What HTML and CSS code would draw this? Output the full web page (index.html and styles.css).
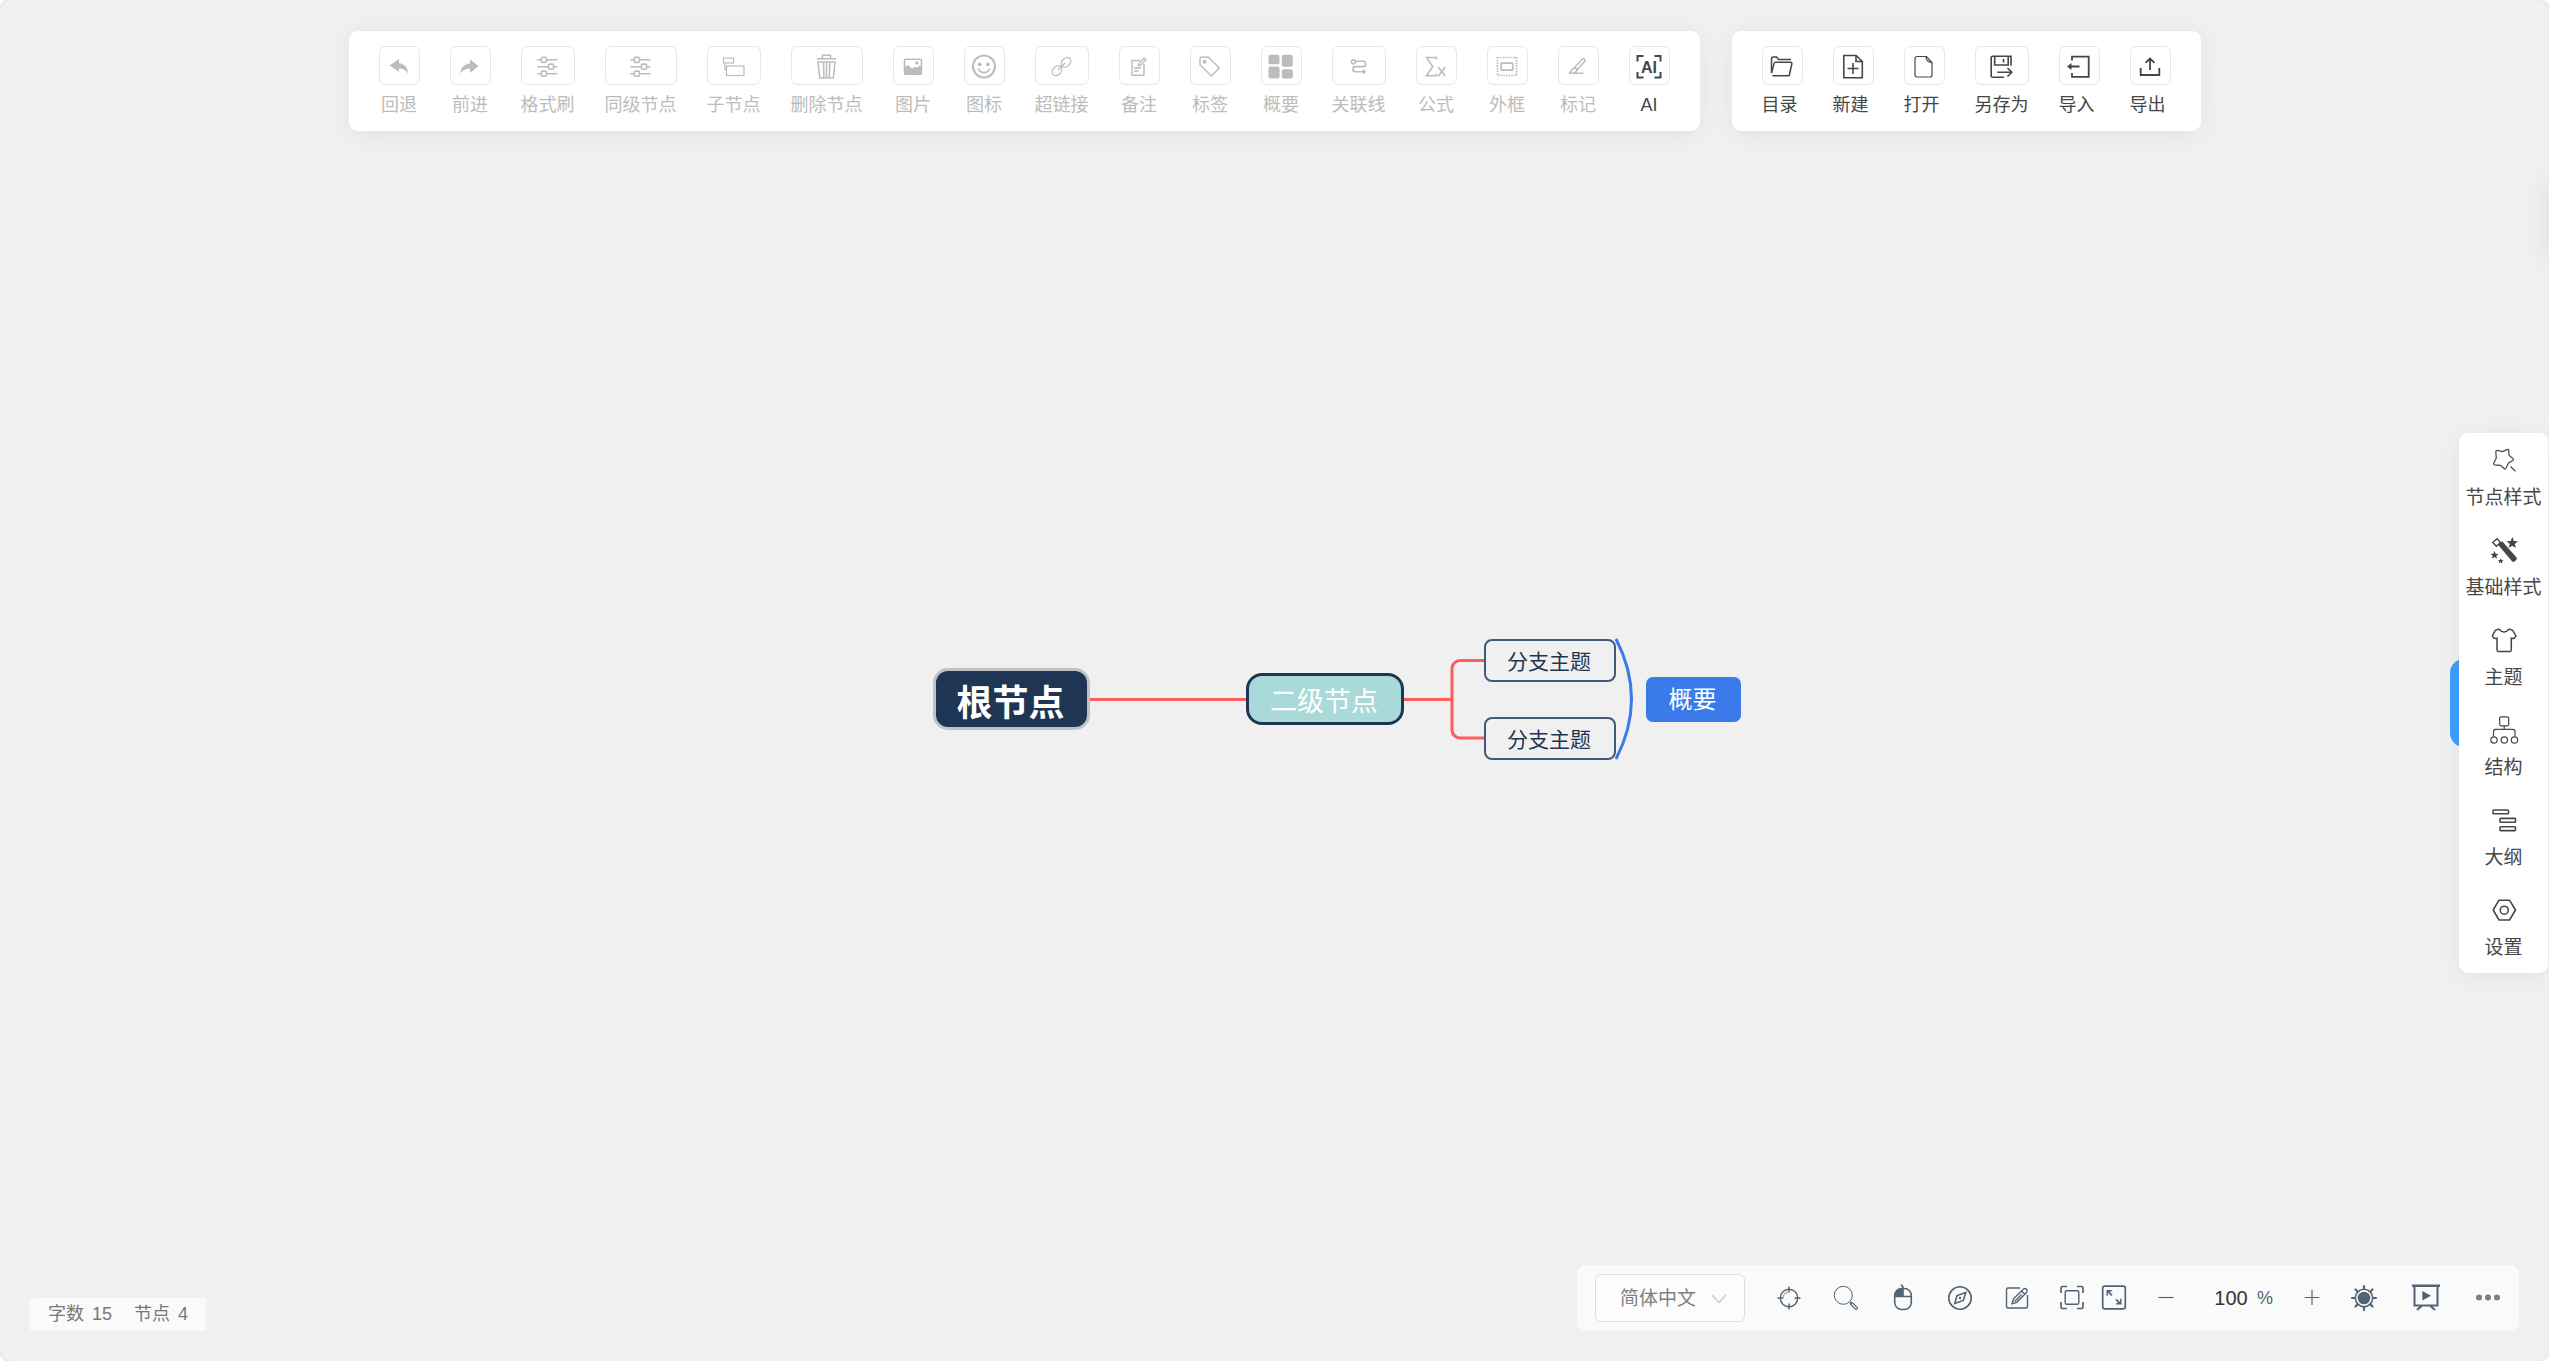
FILE: index.html
```html
<!DOCTYPE html>
<html lang="zh-CN">
<head>
<meta charset="utf-8">
<title>思维导图</title>
<link rel="stylesheet" href="styles.css">
</head>
<body>
<div class="app">
  <section class="map" aria-label="思维导图">
    <svg class="map-lines" width="809" height="121" viewBox="0 0 809 121" fill="none" stroke-width="3">
      <g stroke="#fa5f5e">
        <path d="M157 60.500H313M470 60.500H519"/>
        <path d="M552 21.500H527a8 8 0 0 0-8 8V91a8 8 0 0 0 8 8H552"/>
      </g>
      <path d="M683 0Q714 60 683 120" stroke="#3a7be9"/>
    </svg>
    <div class="node node-root">根节点</div>
    <div class="node node-second">二级节点</div>
    <div class="node node-branch branch-a">分支主题</div>
    <div class="node node-branch branch-b">分支主题</div>
    <div class="node node-summary">概要</div>
  </section>

  <header class="toolbars">
    <div class="toolbar">
      <button class="tool" disabled><span class="tool-icon"><svg viewBox="0 0 24 24"><path class="solid" d="M2.500 11.500 12 5v4.200c5.500.5 9 4.300 9 10.500-2-3.800-5-5.200-9-5.200V18z"/></svg></span>回退</button>
      <button class="tool" disabled><span class="tool-icon"><svg viewBox="0 0 24 24"><path class="solid" d="M20.500 12 12 5.200v4.200c-5.500.5-9.500 4-9.500 10.300 2-3.800 5.500-5.200 9.500-5.200V19z"/></svg></span>前进</button>
      <button class="tool" disabled><span class="tool-icon"><svg viewBox="0 0 24 24" stroke-width="1.600"><path d="M1.300 5.700h4M11 5.700h10.400M1.300 12.700h11M18 12.700h3.400M1.300 19.700h4M11 19.700h10.400"/><rect x="5.300" y="3.200" width="5.200" height="5.200" rx="1.500"/><rect x="12.400" y="10.100" width="5.200" height="5.200" rx="1.500"/><rect x="5.300" y="17.100" width="5.200" height="5.200" rx="1.500"/></svg></span>格式刷</button>
      <button class="tool" disabled><span class="tool-icon"><svg viewBox="0 0 24 24" stroke-width="1.600"><path d="M1.300 5.700h4M11 5.700h10.400M1.300 12.700h11M18 12.700h3.400M1.300 19.700h4M11 19.700h10.400"/><rect x="5.300" y="3.200" width="5.200" height="5.200" rx="1.500"/><rect x="12.400" y="10.100" width="5.200" height="5.200" rx="1.500"/><rect x="5.300" y="17.100" width="5.200" height="5.200" rx="1.500"/></svg></span>同级节点</button>
      <button class="tool" disabled><span class="tool-icon"><svg viewBox="0 0 24 24" stroke-width="1.200"><rect x="1.500" y="4" width="10" height="5"/><rect x="4.500" y="12" width="17.500" height="9.500"/><path d="M3 9v7h1.500"/></svg></span>子节点</button>
      <button class="tool" disabled><span class="tool-icon"><svg viewBox="0 0 24 24" stroke-width="1.500"><path d="M2 4.700h19M7.500 4.500V1.300h8v3.200M3 8h17l-1.700 16H4.700zM8.500 8l.5 16M11.500 8v16M14.800 8l-.5 16"/></svg></span>删除节点</button>
      <button class="tool" disabled><span class="tool-icon"><svg viewBox="0 0 24 24" stroke-width="1.500"><rect x="3.500" y="5.200" width="17" height="15" rx="1.200"/><path class="solid" d="M3.500 13 7 11l4 3.500 2.500-1.500 2.500.5 3-2 1.500 1v8h-17z"/><circle class="solid" cx="15.800" cy="9" r="1.700"/></svg></span>图片</button>
      <button class="tool" disabled><span class="tool-icon"><svg viewBox="0 0 24 24" stroke-width="2"><circle cx="12" cy="12.500" r="11"/><circle class="solid" cx="7.700" cy="10.300" r="1.900"/><circle class="solid" cx="16" cy="10.300" r="1.900"/><path stroke-width="1.600" d="M6.300 14.500c2 5.500 9.400 5.500 11.400 0"/></svg></span>图标</button>
      <button class="tool" disabled><span class="tool-icon"><svg viewBox="0 0 24 24" stroke-width="1.300"><ellipse cx="7" cy="16.700" rx="5.500" ry="4" transform="rotate(-45 7 16.700)"/><ellipse cx="16" cy="8.300" rx="5.500" ry="4" transform="rotate(-45 16 8.300)"/><path d="m8 16 7-7" stroke-width="1.500"/></svg></span>超链接</button>
      <button class="tool" disabled><span class="tool-icon"><svg viewBox="0 0 24 24" stroke-width="1.400"><path d="M13 6.500H5v14.800h12V10M7 14h7M7 17h4.500"/><path d="m11.500 11.700.7-2.700 5-5 1.800 1.800-5 5z"/></svg></span>备注</button>
      <button class="tool" disabled><span class="tool-icon"><svg viewBox="0 0 24 24" stroke-width="1.400"><path d="M2 4.200A1 1 0 0 1 3 3.200h7.500L21.300 14l-8 8L2 10.700z"/><circle class="solid" cx="6.700" cy="7.700" r="2"/></svg></span>标签</button>
      <button class="tool" disabled><span class="tool-icon"><svg viewBox="0 0 24 24"><g class="solid"><rect x="-.5" y=".7" width="11" height="9.500" rx="2"/><rect x="12.800" y=".7" width="11" height="12" rx="2"/><rect x="-.5" y="12.500" width="11" height="12" rx="2"/><rect x="12.800" y="15.300" width="11" height="9.300" rx="2"/></g></svg></span>概要</button>
      <button class="tool" disabled><span class="tool-icon"><svg viewBox="0 0 24 24" stroke-width="1.600"><circle cx="6.500" cy="7.700" r="2"/><path d="M8.500 7.200H16a2.700 2.700 0 0 1 0 5.400H8.500a2.600 2.600 0 0 0 0 5.200H17"/><path class="solid" d="m15.800 15 3.600 2.800-3.600 2.700z"/></svg></span>关联线</button>
      <button class="tool" disabled><span class="tool-icon"><svg viewBox="0 0 24 24" stroke-width="1.600"><path d="M12.500 5.500V3.500H2.500l6.200 9-6.200 9.300h10v-2M14.300 13l7 9.300M21.300 13l-7 9.300"/></svg></span>公式</button>
      <button class="tool" disabled><span class="tool-icon"><svg viewBox="0 0 24 24" stroke-width="1.700"><rect x="2.500" y="3.500" width="19" height="18" stroke-dasharray="1.600 1.100"/><rect x="6.200" y="9.200" width="11.500" height="7" rx=".5"/></svg></span>外框</button>
      <button class="tool" disabled><span class="tool-icon"><svg viewBox="0 0 24 24" stroke-width="1.400"><path d="M8.500 13.500 16.200 5.300c2-1.500 3.800.5 2.500 2.200l-7.400 8z"/><path d="M8.300 14c3 0 4 4-1 5.200H3c2-.7 2.500-4.700 5.300-5.200M7 19.300h10.500" stroke-width="1.600"/></svg></span>标记</button>
      <button class="tool"><span class="tool-icon"><svg viewBox="0 0 24 24" stroke-width="2"><path d="M.5 7.500V2h6M17.500 2h6v5.500M23.500 18v5.500h-6M6.500 23.500h-6V18"/><text class="ai-text" x="12" y="18.500">AI</text></svg></span>AI</button>
    </div>
    <div class="toolbar toolbar-file">
      <button class="tool"><span class="tool-icon"><svg viewBox="0 0 24 24" stroke-width="1.500"><path d="M1.500 19V4.500q0-1.500 1.500-1.500h3.500l2 2.500H21"/><path d="M1.500 19 4 9.700Q4.300 8.300 5.500 8.300h15q1.700 0 1.300 1.700L19.500 20.500q-.3 1.300-1.500 1.300H2.500"/></svg></span>目录</button>
      <button class="tool"><span class="tool-icon"><svg viewBox="0 0 24 24" stroke-width="1.600"><path d="M2.800 1.500h12.500l6 6v16.300H2.800zM15 1.500v6h6.300M12 9v11M6.500 14.500h11"/></svg></span>新建</button>
      <button class="tool"><span class="tool-icon"><svg viewBox="0 0 24 24" stroke-width="1.200"><path d="M5 2.500h9.500l5.500 6V21a2 2 0 0 1-2 2H5a2 2 0 0 1-2-2V4.500a2 2 0 0 1 2-2zM14 2.500q0 5.500 6 6"/></svg></span>打开</button>
      <button class="tool"><span class="tool-icon"><svg viewBox="0 0 24 24" stroke-width="1.600"><path d="M14 23.200H2.500q-1.300 0-1.300-1.300V3.500Q1.200 2.200 2.500 2.200H21v9.500M4.700 2.200V11h13.500V2.200M13.500 5v3.500M7.300 18.200h14.200M17.500 14l4.300 4.200-4.300 4.300"/></svg></span>另存为</button>
      <button class="tool"><span class="tool-icon"><svg viewBox="0 0 24 24" stroke-width="1.800"><path d="M5 6.500V2.700h16.700v20.100H5V19M12.500 12.500H3"/><path class="solid" d="M0 12.500 4.500 9v7z"/></svg></span>导入</button>
      <button class="tool"><span class="tool-icon"><svg viewBox="0 0 24 24" stroke-width="1.800"><path d="M2.700 14v7h18.600v-7M12 16V5M7.500 8.800 12 4.500l4.500 4.300"/></svg></span>导出</button>
    </div>
  </header>

  <main class="stage">
    <nav class="side" aria-label="侧边栏">
      <div class="side-panel">
        <button class="side-item"><svg viewBox="0 0 28 28" stroke-width="1.200"><path d="M7.500 4.300 12.500 5.500 17.500 3.400q1.300-.3 1.300 1L19 9.300l4.200 3.600q.7.900-.3 1.500L18.500 17l-2.700 5.500q-.7 1-1.500.2L10.500 19.300 4.500 18.800q-1.200-.3-.8-1.400L6.300 12 5.800 5.500q.2-1.300 1.700-1.200zM20.500 20.500l5 4.800"/></svg>节点样式</button>
        <button class="side-item"><svg viewBox="0 0 28 28"><g class="solid"><path d="M8 8.800 12.200 5.200 26.500 21.500q.8 1.400-.3 2.500l-1.700 1.500q-1.300.9-2.500-.3z"/><path d="m22.300 1 1.600 4 4.100.3-3.200 2.600 1.100 4.100-3.600-2.300-3.600 2.300 1.100-4.100L16.600 5.300l4.100-.3zM4.500 14.800l1.100 2.900 3 .2-2.300 1.900.8 3-2.600-1.700L1.900 22.800l.8-3L.4 17.900l3-.2zM10.700 22.300l.8 1.800 2 .1-1.500 1.300.5 1.900-1.800-1.100-1.800 1.100.5-1.900-1.500-1.300 2-.1z"/></g><path d="M2.800 6.500 7 2.800 10.500 6.500 6.300 10.300z" stroke-width="1.400"/></svg>基础样式</button>
        <button class="side-item"><svg viewBox="0 0 28 28" stroke-width="1.500"><path d="M9 3.200q5 5.500 10 0 3 0 4 1.600L26 10q-1.700 3.500-4.700 2.200V24q0 1.400-1.400 1.400H8.300Q7 25.400 7 24V12.200Q4 13.500 2.300 10L5 4.800q1-1.600 4-1.600z"/></svg>主题</button>
        <button class="side-item"><svg viewBox="0 0 28 28" stroke-width="1.200"><rect x="9.700" y=".8" width="9" height="9" rx="1.500"/><path d="M14.200 9.800v3.500M3.500 20.500v-5q0-2.200 2.200-2.200h17.100q2.200 0 2.200 2.200v5"/><circle cx="4" cy="24" r="3.200"/><circle cx="14.300" cy="24" r="3.200"/><circle cx="24.500" cy="24" r="3.200"/></svg>结构</button>
        <button class="side-item"><svg viewBox="0 0 28 28" stroke-width="1.600"><rect x="3" y="4" width="15.500" height="3.800" rx=".8"/><rect x="10" y="12.400" width="15.500" height="3.800" rx=".8"/><rect x="10" y="20.800" width="15.500" height="3.800" rx=".8"/></svg>大纲</button>
        <button class="side-item"><svg viewBox="0 0 28 28" stroke-width="1.600"><path d="M9 4.200h10.500L25.500 14l-6 10H9L3.200 14z" stroke-linejoin="round"/><circle cx="14.300" cy="14.200" r="4"/></svg>设置</button>
      </div>
    </nav>
  </main>

  <footer class="bottom">
    <div class="counts">
      <span class="count">字数<span>15</span></span>
      <span class="count">节点<span>4</span></span>
    </div>
    <div class="controls">
      <div class="lang">
        <select class="lang-select" aria-label="语言"><option>简体中文</option></select>
        <svg class="lang-arrow" viewBox="0 0 16 10"><path d="m1 1 7 7.500L15 1"/></svg>
      </div>
      <div class="group group-tools">
        <button class="ctl" aria-label="回到根节点"><svg viewBox="0 0 28 28" stroke-width="1.400"><circle cx="14" cy="14" r="8.700"/><path d="M14 2.500v6M14 19.500v6M2.500 14h6M19.500 14h6"/><path d="M8 13a6 6 0 0 1 5-5" stroke-width=".7"/></svg></button>
        <button class="ctl" aria-label="搜索"><svg viewBox="0 0 28 28" stroke-width="1"><circle cx="11.300" cy="11.300" r="9"/><path d="m17.500 17.500 2 2"/><path d="m18.200 20 1.700-1.700 5.500 5.200q.5 1.700-1.600 2z" stroke-width="1.100"/></svg></button>
        <button class="ctl" aria-label="鼠标行为"><svg viewBox="0 0 28 28" stroke-width="1.600"><rect x="5.700" y="4.500" width="16.600" height="21" rx="7"/><path d="M5.700 12.500h16.600M14 12.500V4q0-2.500-2.300-3"/><path class="solid" d="M14 4.500v8H5.700c0-5 2.300-8 8.300-8z"/></svg></button>
        <button class="ctl" aria-label="小地图"><svg viewBox="0 0 28 28" stroke-width="1.600"><circle cx="14" cy="14" r="11.200"/><path d="m19.800 8.500-2.500 8-8.600 3 2.300-8z"/><circle class="solid" cx="14" cy="14" r="1.200"/></svg></button>
        <button class="ctl" aria-label="编辑"><svg viewBox="0 0 28 28" stroke-width="1.400"><path d="M17 4H5Q3.500 4 3.500 5.500v17Q3.500 24 5 24h18q1.500 0 1.500-1.500V11"/><path d="M9 19.800l1.500-5L20.500 5q1.700-1 3 .3t.2 3l-10 10zM18.500 7l3.200 3.200M11.500 17.500l7-7"/></svg></button>
      </div>
      <div class="group group-view">
        <button class="ctl" aria-label="适应画布"><svg viewBox="0 0 28 28" stroke-width="1.700"><path d="M3 9V4q0-1.500 1.500-1.500H9M19 2.500h4.500Q25 2.500 25 4v5M25 18v5q0 1.500-1.500 1.500H19M9 24.500H4.500Q3 24.500 3 23v-5"/><rect x="7.200" y="6.700" width="13.600" height="13.600" rx="1.500" stroke-width="1.400"/></svg></button>
        <button class="ctl" aria-label="全屏"><svg viewBox="0 0 28 28" stroke-width="1.700"><rect x="2.700" y="2.200" width="22.600" height="22.600" rx="2"/><path d="m8 7.300 4 4M20 19.300l-4-4"/><path class="solid" d="M6.500 6h6l-1.500 1.700H8V11l-1.500 1.500zM21.500 20.500h-6l1.500-1.700h3v-3.300l1.500-1.500z"/></svg></button>
      </div>
      <div class="group group-zoom">
        <button class="ctl" aria-label="缩小"><svg viewBox="0 0 28 28" stroke-width="1.200"><path d="M6.500 13.500h15"/></svg></button>
        <label class="zoom"><input class="zoom-input" type="text" value="100" aria-label="缩放">%</label>
        <button class="ctl" aria-label="放大"><svg viewBox="0 0 28 28" stroke-width="1.200"><path d="M6.500 13.500h15M14 6v15"/></svg></button>
      </div>
      <div class="group group-more">
        <button class="ctl ctl-sun" aria-label="切换主题"><svg viewBox="0 0 28 28" stroke-width="1.500"><circle class="solid" cx="14" cy="14" r="6.300"/><circle cx="14" cy="14" r="8.700"/><path stroke-width="2.200" stroke-linecap="round" d="M14 5V2M14 23v3M5 14H2M23 14h3M7.500 7.500l-2-2M20.500 7.500l2-2M7.500 20.500l-2 2M20.500 20.500l2 2"/></svg></button>
        <button class="ctl" aria-label="演示"><svg viewBox="0 0 28 28" stroke-width="2"><path d="M0 1.800h28" stroke-width="2.600"/><path d="M2.500 2v19.500h23V2M9.500 22 5 26M18.500 22l4.500 4"/><path class="solid" d="m10.300 7 8.700 4.700-8.700 4.700z"/></svg></button>
        <button class="ctl ctl-dots" aria-label="更多"><svg viewBox="0 0 28 28"><g class="solid"><circle cx="5" cy="13.500" r="3"/><circle cx="14" cy="13.500" r="3"/><circle cx="23" cy="13.500" r="3"/></g></svg></button>
      </div>
    </div>
  </footer>
  <div class="drawer"></div>
</div>
</body>
</html>
```
FILE: styles.css
```css
* { box-sizing: border-box; }
body {
  margin: 0;
  background: #fff;
  font-family: "Liberation Sans", "Noto Sans CJK SC", sans-serif;
  color: #464646;
}
button {
  margin: 0;
  padding: 0;
  border: 0;
  background: none;
  color: inherit;
  font: inherit;
}
svg {
  display: block;
  fill: none;
  stroke: currentColor;
  overflow: visible;
}
.solid { fill: currentColor; stroke: none; }

.app {
  position: relative;
  display: flex;
  flex-direction: column;
  min-height: 100vh;
  overflow: hidden;
  border-radius: 12px;
  background: #f0f0f0;
  box-shadow: 0 0 3px rgba(0, 0, 0, .3);
}

/* mind map canvas */
.map { position: absolute; left: 933px; top: 639px; }
.map-lines { stroke: none; }
.node {
  position: absolute;
  display: flex;
  align-items: center;
  justify-content: center;
  padding-right: 2px;
  white-space: nowrap;
}
.node-root {
  left: 0; top: 29px; width: 157px; height: 62px;
  padding-top: 2px;
  border: 3px solid #bcc4c8;
  border-radius: 15px;
  background: #1f3554;
  color: #fff;
  font-size: 36px;
  font-weight: 700;
}
.node-second {
  left: 313px; top: 34px; width: 158px; height: 52px;
  border: 3px solid #1f3554;
  border-radius: 16px;
  background: #a9dad9;
  color: #fff;
  font-size: 27px;
}
.node-branch {
  left: 551px; width: 132px; height: 43px;
  padding-bottom: 2px;
  border: 2px solid #45577a;
  border-radius: 8px;
  color: #1f3554;
  font-size: 21px;
}
.branch-a { top: 0; }
.branch-b { top: 78px; }
.node-summary {
  left: 713px; top: 38px; width: 95px; height: 45px;
  padding-bottom: 4px;
  border-radius: 7px;
  background: #3a7be9;
  color: #fff;
  font-size: 24px;
}

/* top toolbars */
.toolbars {
  position: relative;
  display: flex;
  justify-content: center;
  gap: 32px;
  padding-top: 31px;
}
.toolbar {
  display: flex;
  gap: 30px;
  padding: 15px 30px 14px;
  border-radius: 9px;
  background: #fff;
  box-shadow: 0 3px 24px rgba(0, 0, 0, .06);
}
.tool {
  display: flex;
  flex-direction: column;
  align-items: center;
  gap: 8px;
  min-width: 41px;
  font-size: 18px;
  line-height: 24px;
  white-space: nowrap;
}
.tool:disabled { color: #bcbcbc; }
.toolbar-file .tool { align-items: flex-start; }
.tool-icon {
  display: flex;
  align-items: center;
  justify-content: center;
  align-self: stretch;
  height: 39px;
  border: 1px solid #e6e6e6;
  border-radius: 6px;
}
.tool-icon svg { width: 24px; height: 24px; }
.ai-text {
  fill: currentColor;
  stroke: none;
  font-size: 16px;
  font-weight: 700;
  text-anchor: middle;
}

/* side menu */
.stage {
  flex: 1;
  display: flex;
  align-items: center;
  justify-content: flex-end;
  pointer-events: none;
}
.side {
  position: relative;
  margin: 10px 1px 0 0;
  pointer-events: auto;
}
.side::before {
  content: "";
  position: absolute;
  left: -9px;
  top: 226px;
  width: 30px;
  height: 88px;
  border-radius: 14px;
  background: #409eff;
}
.side-panel {
  position: relative;
  width: 89px;
  border-radius: 9px;
  background: #fff;
  box-shadow: 0 3px 24px rgba(0, 0, 0, .06);
}
.side-item {
  display: flex;
  flex-direction: column;
  align-items: center;
  gap: 11px;
  width: 100%;
  height: 90px;
  padding-top: 13px;
  font-size: 19px;
  line-height: 26px;
  white-space: nowrap;
}
.side-item svg { width: 28px; height: 28px; }

/* bottom bars */
.bottom {
  position: relative;
  display: flex;
  align-items: flex-end;
  justify-content: space-between;
  padding: 0 30px 30px;
}
.counts {
  display: flex;
  gap: 22px;
  padding: 0 18px;
  border-radius: 3px;
  background: #fafafa;
  color: #777;
  font-size: 18px;
  line-height: 33px;
}
.count { display: flex; gap: 8px; }
.controls {
  display: flex;
  align-items: center;
  height: 66px;
  padding: 0 17px 0 18px;
  border-radius: 9px;
  background: #fafafa;
  color: #536375;
}
.lang { position: relative; margin-right: 30px; }
.lang-select {
  appearance: none;
  display: block;
  width: 150px;
  height: 48px;
  padding: 0 24px;
  border: 1px solid #dcdfe6;
  border-radius: 6px;
  background: #fcfcfc;
  color: #808080;
  font: inherit;
  font-size: 19px;
}
.lang-arrow {
  position: absolute;
  right: 18px;
  top: 20px;
  width: 16px;
  height: 10px;
  color: #c8cbd2;
  stroke-width: 1.4;
  pointer-events: none;
}
.group { display: flex; align-items: center; }
.group-tools { gap: 29px; margin-right: 27px; }
.group-view { gap: 14px; margin-right: 24px; }
.group-zoom { gap: 25px; margin-right: 24px; }
.group-more { gap: 34px; }
.ctl svg { width: 28px; height: 28px; }
.ctl-dots { color: #7d7f83; }
.zoom { display: flex; align-items: center; font-size: 18px; }
.zoom-input {
  width: 52px;
  padding: 0;
  border: 0;
  background: none;
  color: #333;
  font: inherit;
  font-size: 20px;
  text-align: center;
}

/* closed drawer parked just past the right edge; only its shadow shows */
.drawer {
  position: absolute;
  left: 100%;
  top: 180px;
  width: 60px;
  height: 80px;
  box-shadow: 0 0 30px rgba(0, 0, 0, .08);
}
```
